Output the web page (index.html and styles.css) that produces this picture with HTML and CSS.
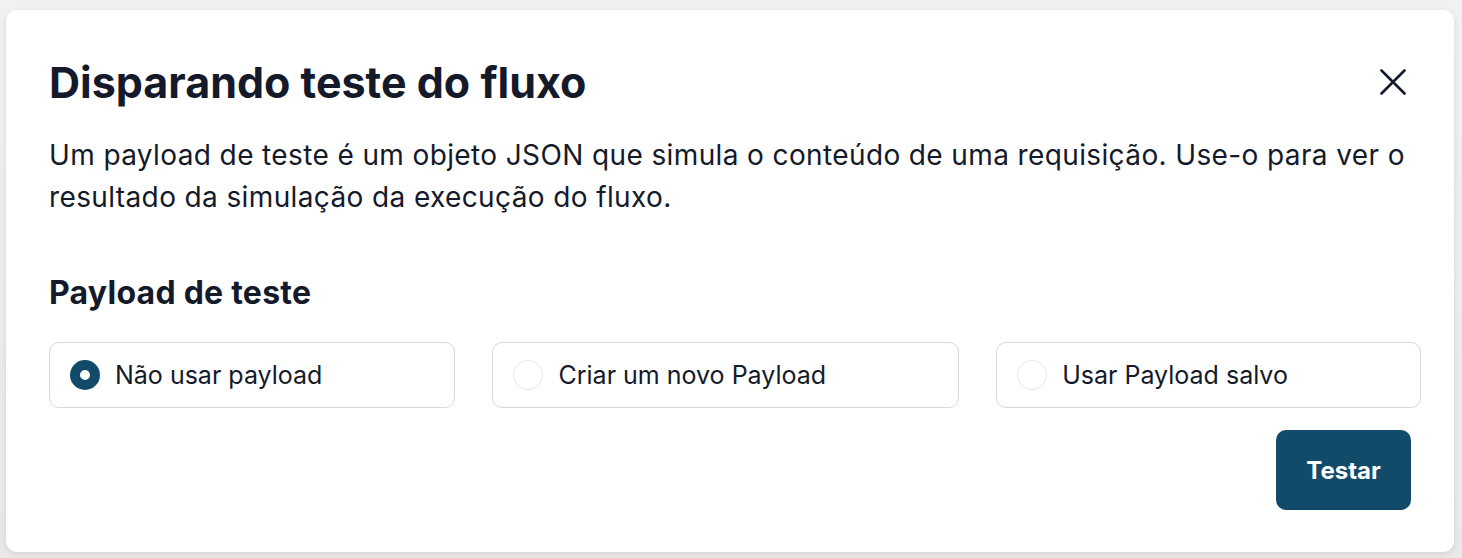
FILE: index.html
```html
<!DOCTYPE html>
<html lang="pt-BR">
<head>
<meta charset="utf-8">
<title>Disparando teste do fluxo</title>
<link rel="stylesheet" href="styles.css">
</head>
<body>
<div class="backdrop">
  <div class="modal" role="dialog" aria-labelledby="modal-title">
    <header class="modal-header">
      <h1 id="modal-title" class="modal-title">Disparando teste do fluxo</h1>
      <button class="close-btn" aria-label="Fechar">
        <svg width="26" height="26" viewBox="0 0 26 26" fill="none" stroke="#141a2a" stroke-width="2.6" stroke-linecap="round">
          <path d="M1.5 1.5 L24.5 24.5 M24.5 1.5 L1.5 24.5"/>
        </svg>
      </button>
    </header>
    <p class="modal-desc">Um payload de teste é um objeto JSON que simula o conteúdo de uma requisição. Use-o para ver o resultado da simulação da execução do fluxo.</p>
    <h2 class="section-title">Payload de teste</h2>
    <div class="options">
      <label class="option">
        <span class="radio radio-checked"></span>
        <span class="option-label">Não usar payload</span>
      </label>
      <label class="option">
        <span class="radio"></span>
        <span class="option-label">Criar um novo Payload</span>
      </label>
      <label class="option">
        <span class="radio"></span>
        <span class="option-label">Usar Payload salvo</span>
      </label>
    </div>
    <div class="actions">
      <button class="primary-btn">Testar</button>
    </div>
  </div>
</div>
</body>
</html>
```

FILE: styles.css
```css
* { box-sizing: border-box; }
html, body {
  margin: 0;
  padding: 0;
  width: 1462px;
  height: 558px;
  overflow: hidden;
}
body {
  font-family: Inter, "Noto Sans", sans-serif;
  background: #ececec;
  color: #141a2a;
}
.backdrop {
  padding: 10px 8px 6px 6px;
  height: 558px;
  background: linear-gradient(180deg, #f1f1f1 0%, #e9e9e9 100%);
}
.modal {
  background: #ffffff;
  border-radius: 11px;
  height: 542px;
  padding: 46px 43px 42px 43px;
  box-shadow: 0 2px 6px rgba(0,0,0,0.10);
}
.modal-header {
  display: flex;
  align-items: center;
  justify-content: space-between;
}
.modal-title {
  margin: 0;
  font-size: 43px;
  line-height: 52px;
  font-weight: 700;
  color: #141a2a;
}
.close-btn {
  border: 0;
  background: none;
  padding: 0;
  margin-right: 5px;
  width: 26px;
  height: 26px;
  display: flex;
  cursor: pointer;
}
.modal-desc {
  margin: 26px 0 0 0;
  font-size: 28px;
  line-height: 42px;
  letter-spacing: 0.38px;
  font-weight: 400;
  color: #141a2a;
}
.section-title {
  margin: 55px 0 0 0;
  font-size: 32px;
  line-height: 40px;
  letter-spacing: 0.25px;
  font-weight: 700;
  color: #141a2a;
}
.options {
  display: flex;
  gap: 37px;
  margin-top: 29px;
  margin-right: -10px;
}
.option {
  flex: 1 1 auto;
  display: flex;
  align-items: center;
  gap: 15px;
  height: 66px;
  padding: 0 20px;
  border: 1px solid #d6d8dc;
  border-radius: 10px;
  background: #fff;
}
.radio {
  width: 30px;
  height: 30px;
  border-radius: 50%;
  border: 1px solid #e6e7ea;
  flex: 0 0 auto;
  background: #fff;
}
.radio-checked {
  border: 10px solid #124b6a;
  background: #fff;
}
.option-label {
  font-size: 25px;
  line-height: 32px;
  color: #141a2a;
  white-space: nowrap;
}
.actions {
  display: flex;
  justify-content: flex-end;
  margin-top: 22px;
}
.primary-btn {
  height: 80px;
  width: 135px;
  border: 0;
  border-radius: 10px;
  background: #124b6a;
  color: #ffffff;
  font-family: Inter, "Noto Sans", sans-serif;
  font-size: 24px;
  font-weight: 700;
  cursor: pointer;
}
```
